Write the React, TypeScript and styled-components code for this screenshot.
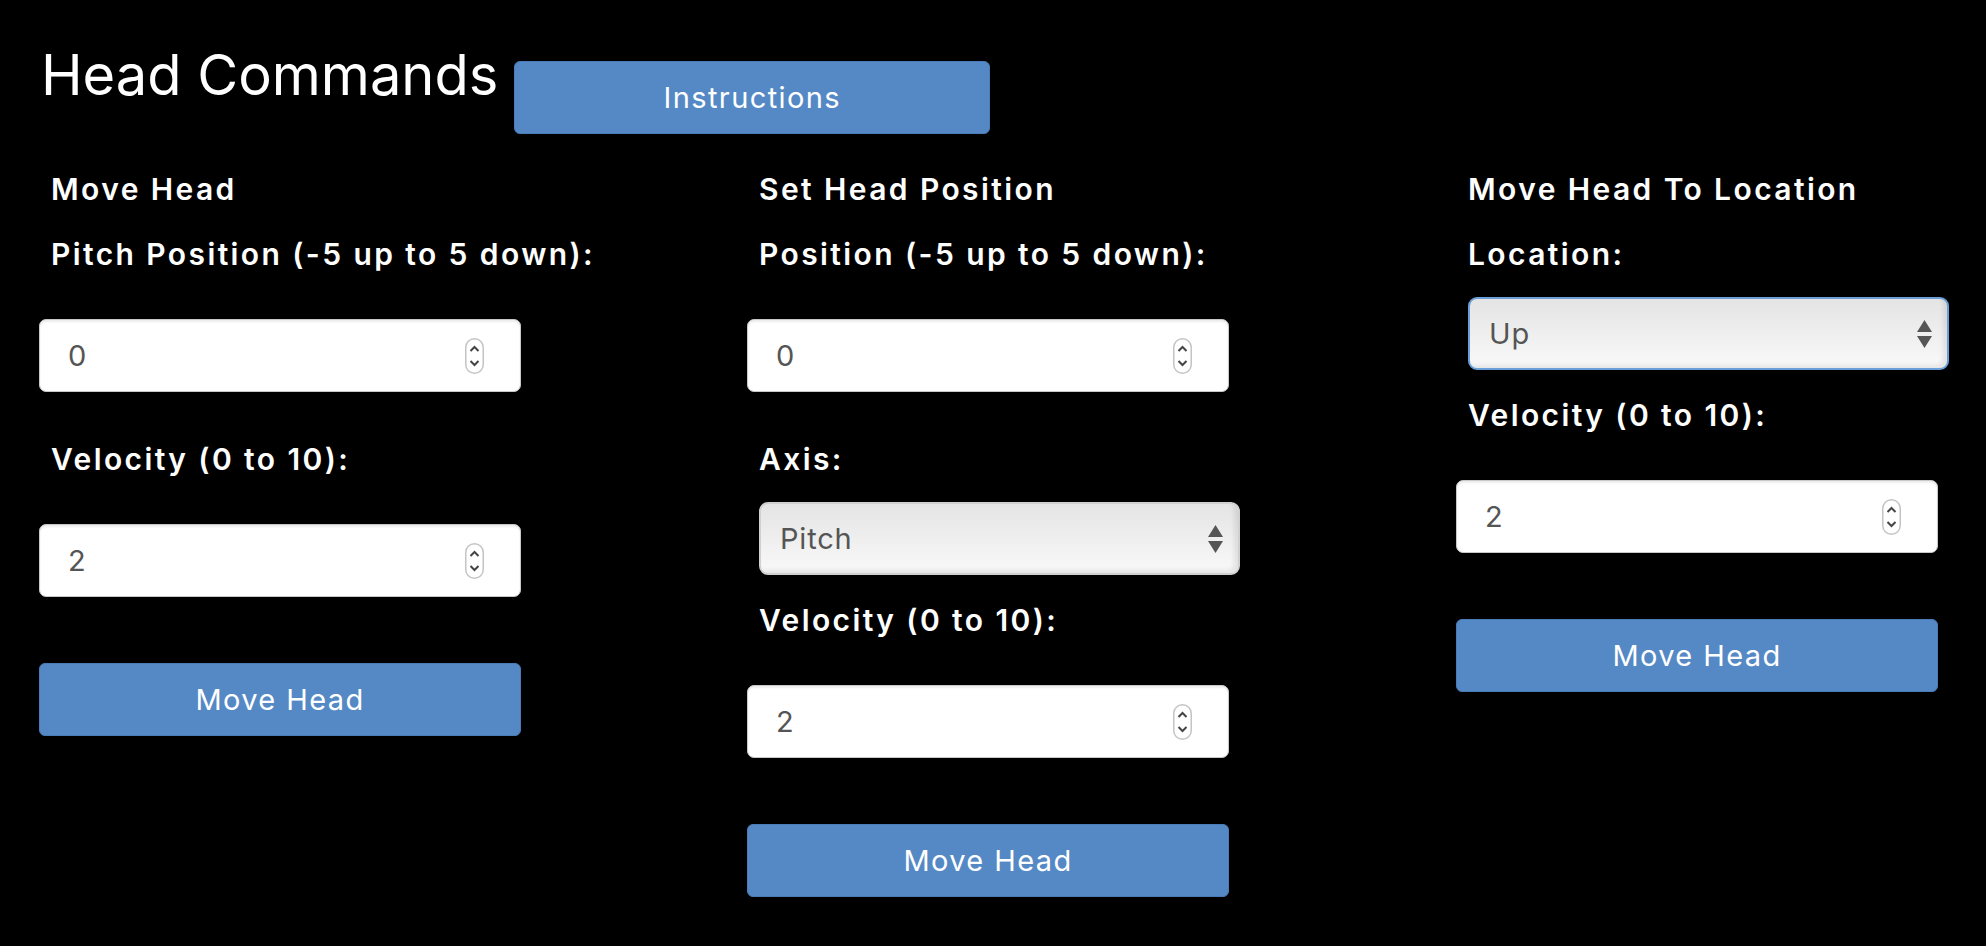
import React from 'react';
import styled, { createGlobalStyle } from 'styled-components';

const GlobalStyle = createGlobalStyle`
  html, body {
    margin: 0;
    padding: 0;
    background: #000;
  }
  body {
    font-family: Inter, "Open Sans", sans-serif;
    color: #fff;
  }
`;

const Page = styled.div`
  min-height: 946px;
  background: #000;
  padding: 42px 0 0 39px;
  box-sizing: border-box;
`;

const TopRow = styled.div`
  display: flex;
  align-items: flex-start;
  margin-bottom: 35px;
`;

const Title = styled.h1`
  margin: 0 16px 0 2px;
  font-size: 56px;
  font-weight: 400;
  line-height: 67px;
  color: #fff;
`;

const Button = styled.button<{ $width?: number }>`
  display: block;
  width: ${(p) => p.$width ?? 482}px;
  height: 73px;
  border: 1px solid #4a7db7;
  border-radius: 6px;
  background: #5489c5;
  color: #fff;
  font-family: Inter, "Open Sans", sans-serif;
  font-size: 29px;
  font-weight: 400;
  letter-spacing: 1.4px;
  cursor: pointer;
`;

const TopButton = styled(Button)`
  margin-top: 19px;
`;

const Columns = styled.div`
  display: grid;
  grid-template-columns: 708px 709px 1fr;
`;

const Column = styled.div`
  display: flex;
  flex-direction: column;
  align-items: flex-start;
`;

const Label = styled.label`
  display: block;
  padding-left: 12px;
  font-size: 30px;
  font-weight: 600;
  letter-spacing: 2.4px;
  line-height: 41px;
  margin-bottom: 24px;
  color: #fff;
  white-space: nowrap;
`;

const NumberBox = styled.div`
  display: flex;
  align-items: center;
  width: 482px;
  height: 73px;
  box-sizing: border-box;
  margin: 20px 0 47px;
  padding: 0 36px 0 28px;
  background: #fff;
  border: 1px solid #c8c8c8;
  border-radius: 7px;
  box-shadow: inset 0 2px 2px rgba(0, 0, 0, 0.08);
`;

const NumberField = styled.input`
  flex: 1;
  min-width: 0;
  border: none;
  outline: none;
  background: transparent;
  font-family: Inter, "Open Sans", sans-serif;
  font-size: 29px;
  letter-spacing: 0.8px;
  color: #555;
  padding: 0;
  -moz-appearance: textfield;
  &::-webkit-outer-spin-button,
  &::-webkit-inner-spin-button {
    -webkit-appearance: none;
    margin: 0;
  }
`;

const SelectBox = styled.div<{ $focused?: boolean }>`
  display: flex;
  align-items: center;
  width: 481px;
  height: 73px;
  box-sizing: border-box;
  margin: -2px 0 25px 12px;
  padding: 0 15px 0 0;
  border: 2px solid ${(p) => (p.$focused ? '#6a9fd9' : '#d0d0d0')};
  border-radius: 9px;
  background: linear-gradient(#e4e4e4, #f9f9f9);
  box-shadow: inset -4px -3px 4px rgba(0, 0, 0, 0.08);
`;

const SelectField = styled.select`
  flex: 1;
  min-width: 0;
  height: 100%;
  border: none;
  outline: none;
  background: transparent;
  -webkit-appearance: none;
  appearance: none;
  padding: 0 0 0 19px;
  font-family: Inter, "Open Sans", sans-serif;
  font-size: 29px;
  letter-spacing: 0.8px;
  color: #555;
`;

const Spinner = () => (
  <svg width="19" height="36" viewBox="0 0 19 36">
    <rect x="0.75" y="0.75" width="17.5" height="34.5" rx="8.75" fill="#fff" stroke="#c4c4c4" strokeWidth="1.5" />
    <path d="M5.5 13 L9.5 9 L13.5 13" fill="none" stroke="#444" strokeWidth="2" />
    <path d="M5.5 23 L9.5 27 L13.5 23" fill="none" stroke="#444" strokeWidth="2" />
  </svg>
);

const Arrows = () => (
  <svg width="15" height="28" viewBox="0 0 15 28">
    <path d="M7.5 0 L15 12 L0 12 Z" fill="#555" />
    <path d="M0 16 L15 16 L7.5 28 Z" fill="#555" />
  </svg>
);

const NumberInput = ({ value }: { value: number }) => (
  <NumberBox>
    <NumberField type="number" defaultValue={value} />
    <Spinner />
  </NumberBox>
);

const Select = ({ options, focused }: { options: string[]; focused?: boolean }) => (
  <SelectBox $focused={focused}>
    <SelectField defaultValue={options[0]}>
      {options.map((o) => (
        <option key={o}>{o}</option>
      ))}
    </SelectField>
    <Arrows />
  </SelectBox>
);

const ActionButton = styled(Button)`
  margin-top: 19px;
`;

export default function App() {
  return (
    <>
      <GlobalStyle />
      <Page>
        <TopRow>
          <Title>Head Commands</Title>
          <TopButton $width={476}>Instructions</TopButton>
        </TopRow>
        <Columns>
          <Column>
            <Label>Move Head</Label>
            <Label>Pitch Position (-5 up to 5 down):</Label>
            <NumberInput value={0} />
            <Label>Velocity (0 to 10):</Label>
            <NumberInput value={2} />
            <ActionButton>Move Head</ActionButton>
          </Column>
          <Column>
            <Label>Set Head Position</Label>
            <Label>Position (-5 up to 5 down):</Label>
            <NumberInput value={0} />
            <Label>Axis:</Label>
            <Select options={['Pitch', 'Yaw']} />
            <Label>Velocity (0 to 10):</Label>
            <NumberInput value={2} />
            <ActionButton>Move Head</ActionButton>
          </Column>
          <Column>
            <Label>Move Head To Location</Label>
            <Label>Location:</Label>
            <Select options={['Up', 'Down', 'Left', 'Right', 'Center']} focused />
            <Label>Velocity (0 to 10):</Label>
            <NumberInput value={2} />
            <ActionButton>Move Head</ActionButton>
          </Column>
        </Columns>
      </Page>
    </>
  );
}
